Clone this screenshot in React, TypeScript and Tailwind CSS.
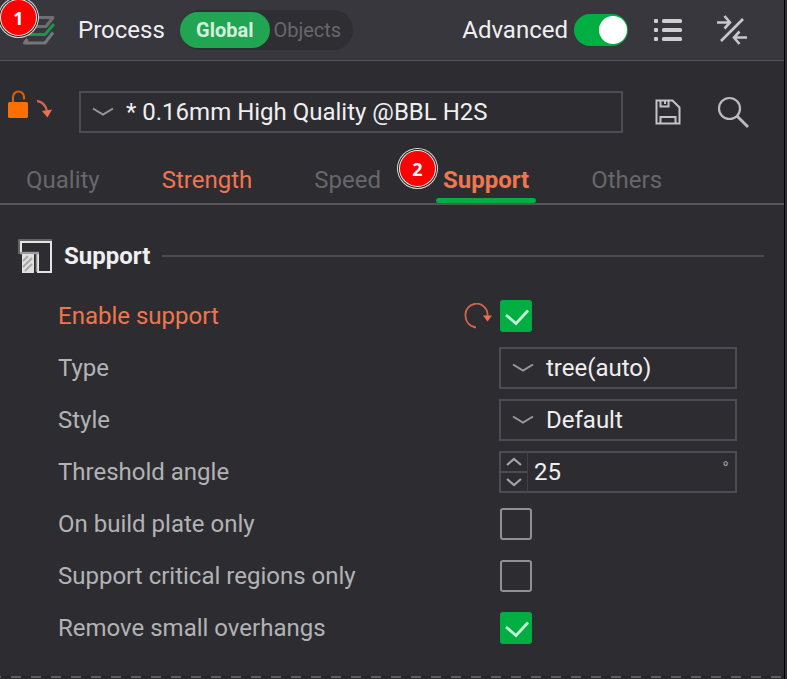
import React, { useState } from 'react';
import clsx from 'clsx';

const TABS = [
  { id: 'quality', label: 'Quality', modified: false },
  { id: 'strength', label: 'Strength', modified: true },
  { id: 'speed', label: 'Speed', modified: false },
  { id: 'support', label: 'Support', modified: true },
  { id: 'others', label: 'Others', modified: false },
];

const LayersIcon = () => (
  <svg width="34" height="32" viewBox="0 0 34 32" fill="none" strokeWidth="3" strokeLinejoin="round">
    <path d="M9 3.500h22l-7 9H3z" stroke="#6f6f73" />
    <path d="M32 10l-9 10.500H4l3-4" stroke="#149a44" />
    <path d="M31 18.500l-8 10.500H2.500l3-4" stroke="#77777a" />
  </svg>
);

const ListIcon = () => (
  <svg width="30" height="26" viewBox="0 0 30 26" fill="#cfcfd2">
    {[2, 11, 20].map((y) => (
      <g key={y}>
        <rect x="1" y={y} width="4" height="4" rx="1" />
        <rect x="9" y={y} width="20" height="4" rx="1.500" />
      </g>
    ))}
  </svg>
);

const CompareIcon = () => (
  <svg width="30" height="30" viewBox="0 0 30 30" fill="none" stroke="#c8c8cb" strokeWidth="2.600">
    <path d="M26 4L4 26" />
    <path d="M0 7.500h13M7.500 1l5.500 6.500-5.500 6" />
    <path d="M30 22.500H17M22.500 29L17 22.500l5.500-6" />
  </svg>
);

const UnlockIcon = () => (
  <svg width="20" height="28" viewBox="0 0 20 28">
    <path d="M5 13V7a5.500 5.500 0 0 1 11 0v2.500" fill="none" stroke="#d2600a" strokeWidth="2.200" />
    <rect y="12" width="20" height="16" rx="1.500" fill="#ff6f00" />
  </svg>
);

const ArrowDownIcon = () => (
  <svg width="16" height="20" viewBox="0 0 16 20">
    <path d="M0 3c6 1 9 5 10 10" fill="none" stroke="#d1654a" strokeWidth="2.400" />
    <path d="M5 13l10-1.500-4.500 8z" fill="#e8714e" />
  </svg>
);

const SaveIcon = () => (
  <svg width="26" height="26" viewBox="0 0 26 26" fill="none" stroke="#c4c4c6" strokeWidth="2">
    <path d="M1.500 1.500h16l7 7v16h-23z" />
    <path d="M5.500 24v-6h15v6M5.500 2v5.500h8V2M10 2v3" />
  </svg>
);

const SearchIcon = () => (
  <svg width="32" height="32" viewBox="0 0 32 32" fill="none" stroke="#bdbdbf" strokeWidth="2.200">
    <circle cx="12.500" cy="12.500" r="10.500" />
    <path d="M20 20l11 11" strokeWidth="2.800" />
  </svg>
);

const SupportIcon = () => (
  <svg width="34" height="34" viewBox="0 0 34 34" fill="none">
    <path d="M3 14V3h30v30H20V14z" stroke="#e4e4e4" strokeWidth="2" />
    <path d="M1 15V1h33" stroke="#77777a" strokeWidth="1.500" />
    <path d="M2 14h19" stroke="#9c9c9e" strokeWidth="2.400" />
    <rect x="4" y="15" width="12" height="19" fill="#e0e0e0" />
    <path d="M5 22l5-5M5 28l9-9M7 32l7-7" stroke="#a9a9ab" strokeWidth="2" />
    <path d="M18.500 15v18" stroke="#8e8e90" strokeWidth="1.500" />
  </svg>
);

const ResetIcon = () => (
  <svg width="28" height="26" viewBox="0 0 28 26">
    <path d="M12 24.500C5 23.500 1.500 18 1.500 13A11 11 0 0 1 23.500 10.500v4" fill="none" stroke="#d1654a" strokeWidth="1.800" />
    <path d="M19 12.500h9l-4.500 6z" fill="#e8714e" />
  </svg>
);

const Chevron = ({ className }: { className?: string }) => (
  <svg className={className} width="22" height="10" viewBox="0 0 22 10" fill="none" stroke="#98989b" strokeWidth="2">
    <path d="M1 1.500l10 6 10-6" />
  </svg>
);

const Badge = ({ children, className }: { children: React.ReactNode; className?: string }) => (
  <span
    className={clsx(
      'absolute z-10 flex size-[35px] items-center justify-center rounded-full bg-[#fe0000] font-["Open_Sans",sans-serif] text-lg font-bold text-white shadow-[0_0_0_1px_#eee,0_0_0_2px_#222,0_0_0_3px_#ddd]',
      className
    )}
  >
    {children}
  </span>
);

interface SelectProps {
  id: string;
  options: string[];
  label?: string;
}

const Select = ({ id, options, label }: SelectProps) => (
  <div className="relative w-full">
    <select
      id={id}
      aria-label={label}
      className="h-[42px] w-full appearance-none border-2 border-[#4c4c52] bg-[#2d2c31] pl-[45px] text-[#efeff0] outline-none"
    >
      {options.map((option) => (
        <option key={option}>{option}</option>
      ))}
    </select>
    <Chevron className="pointer-events-none absolute top-4 left-[13px]" />
  </div>
);

const Checkbox = ({ id, defaultChecked }: { id: string; defaultChecked?: boolean }) => (
  <span className="relative ml-px block size-8">
    <input
      id={id}
      type="checkbox"
      defaultChecked={defaultChecked}
      className="peer block size-8 appearance-none rounded-[3px] border-2 border-[#909092] checked:border-[#00ae42] checked:bg-[#00ae42]"
    />
    <svg
      className="pointer-events-none absolute inset-0 hidden peer-checked:block"
      width="32"
      height="32"
      viewBox="0 0 32 32"
      fill="none"
      stroke="#c4edd3"
      strokeWidth="2.800"
    >
      <path d="M6 15l10 8.500L28 10.500" />
    </svg>
  </span>
);

const AngleInput = ({ id }: { id: string }) => {
  const [value, setValue] = useState(25);

  return (
    <div className="flex h-[42px] w-full border-2 border-[#4c4c52]">
      <div className="flex w-[27px] flex-col border-r border-[#404045]">
        <button aria-label="Increase" className="flex flex-1 items-center justify-center border-b-2 border-[#4c4c52]" onClick={() => setValue(value + 1)}>
          <svg width="16" height="10" viewBox="0 0 16 10" fill="none" stroke="#a4a4a6" strokeWidth="2.200">
            <path d="M1 8l7-6 7 6" />
          </svg>
        </button>
        <button aria-label="Decrease" className="flex flex-1 items-center justify-center" onClick={() => setValue(value - 1)}>
          <svg width="16" height="10" viewBox="0 0 16 10" fill="none" stroke="#a4a4a6" strokeWidth="2.200">
            <path d="M1 2l7 6 7-6" />
          </svg>
        </button>
      </div>
      <input
        id={id}
        type="text"
        value={value}
        onChange={(e) => setValue(Number(e.target.value) || 0)}
        className="min-w-0 flex-1 bg-transparent pl-1.5 text-[#efeff0] outline-none"
      />
      <span className="pt-0.5 pr-1.5 text-lg text-[#98989b]">°</span>
    </div>
  );
};

interface RowProps {
  id: string;
  label: string;
  modified?: boolean;
  children: React.ReactNode;
}

const Row = ({ id, label, modified, children }: RowProps) => (
  <div className="flex h-[52px] items-center">
    <label htmlFor={id} className={clsx('flex-1', modified ? 'text-[#f1754e]' : 'text-[#b2b3b5]')}>
      {label}
    </label>
    {modified && (
      <button aria-label={`Reset ${label}`} className="mr-[7px]">
        <ResetIcon />
      </button>
    )}
    <div className="w-[238px]">{children}</div>
  </div>
);

export default function App() {
  const [activeTab, setActiveTab] = useState('support');
  const [scope, setScope] = useState('Global');

  return (
    <div className="flex min-h-screen bg-[#28333a] font-[Roboto,sans-serif] text-2xl text-[#efeff0]">
      <div className="mr-0.5 flex min-w-0 flex-1 flex-col border-r border-black bg-[#2d2c31]">
        {/* Title bar */}
        <header className="relative flex h-[61px] items-center border-b border-[#55555a] bg-[#38373d] pr-[37px] pl-[22px]">
          <Badge className="top-0 left-px">1</Badge>
          <LayersIcon />
          <h1 className="ml-[22px]">Process</h1>
          <div className="ml-[15px] flex h-10 items-center rounded-full bg-[#2f2e33] text-xl">
            {['Global', 'Objects'].map((item) => (
              <button
                key={item}
                onClick={() => setScope(item)}
                className={clsx(
                  'h-9 rounded-full',
                  scope === item ? 'w-[90px] bg-[#22a552] font-bold text-[#d3f0dd]' : 'w-[83px] pr-2 text-[#68686c]'
                )}
              >
                {item}
              </button>
            ))}
          </div>
          <label htmlFor="advanced" className="ml-auto">Advanced</label>
          <input
            id="advanced"
            type="checkbox"
            role="switch"
            defaultChecked
            className="ml-1.5 flex h-8 w-[54px] appearance-none items-center rounded-full bg-[#6b6b70] px-px before:size-7 before:rounded-full before:bg-white checked:justify-end checked:bg-[#00ae42]"
          />
          <button aria-label="Parameter list" className="ml-[25px]">
            <ListIcon />
          </button>
          <button aria-label="Compare presets" className="ml-[34px]">
            <CompareIcon />
          </button>
        </header>

        {/* Preset selector */}
        <div className="flex h-[102px] items-center pr-[35px] pl-2">
          <button aria-label="Unlock" className="mb-4">
            <UnlockIcon />
          </button>
          <button aria-label="Reset all" className="ml-[9px] mb-2">
            <ArrowDownIcon />
          </button>
          <div className="ml-[26px] flex-1">
            <Select id="preset" label="Preset" options={['* 0.16mm High Quality @BBL H2S']} />
          </div>
          <button aria-label="Save preset" className="ml-8">
            <SaveIcon />
          </button>
          <button aria-label="Search" className="ml-9">
            <SearchIcon />
          </button>
        </div>

        {/* Tabs */}
        <nav className="flex h-[42px] gap-12 border-b-2 border-[#55555a] pl-[19px]">
          {TABS.map((tab) => (
            <button
              key={tab.id}
              onClick={() => setActiveTab(tab.id)}
              className={clsx(
                'relative px-[7px] pb-1.5',
                tab.modified ? 'text-[#f1754e]' : 'text-[#67676a]',
                activeTab === tab.id && 'font-bold'
              )}
            >
              {tab.label}
              {tab.id === 'support' && <Badge className="-top-3 -left-9">2</Badge>}
              {activeTab === tab.id && <span className="absolute inset-x-0 bottom-0 h-[5px] rounded-full bg-[#00ae42]" />}
            </button>
          ))}
        </nav>

        {/* Support settings */}
        <main className="flex-1 pt-[34px]">
          <div className="mb-[17px] flex h-[34px] items-center pr-5 pl-[18px]">
            <SupportIcon />
            <h2 className="ml-3 font-bold">Support</h2>
            <div className="ml-3 h-0.5 flex-1 bg-[#4c4c52]" />
          </div>
          <div className="pr-[47px] pl-[58px]">
            <Row id="enable" label="Enable support" modified>
              <Checkbox id="enable" defaultChecked />
            </Row>
            <Row id="type" label="Type">
              <Select id="type" options={['tree(auto)', 'normal(auto)']} />
            </Row>
            <Row id="style" label="Style">
              <Select id="style" options={['Default', 'Snug']} />
            </Row>
            <Row id="angle" label="Threshold angle">
              <AngleInput id="angle" />
            </Row>
            <Row id="plate" label="On build plate only">
              <Checkbox id="plate" />
            </Row>
            <Row id="critical" label="Support critical regions only">
              <Checkbox id="critical" />
            </Row>
            <Row id="overhangs" label="Remove small overhangs">
              <Checkbox id="overhangs" defaultChecked />
            </Row>
          </div>
        </main>
        <div className="mb-px h-0.5 bg-[repeating-linear-gradient(90deg,#5c5c61_0_1px,#252529_1px_11px,#5c5c61_11px_20px)]" />
      </div>
    </div>
  );
}
